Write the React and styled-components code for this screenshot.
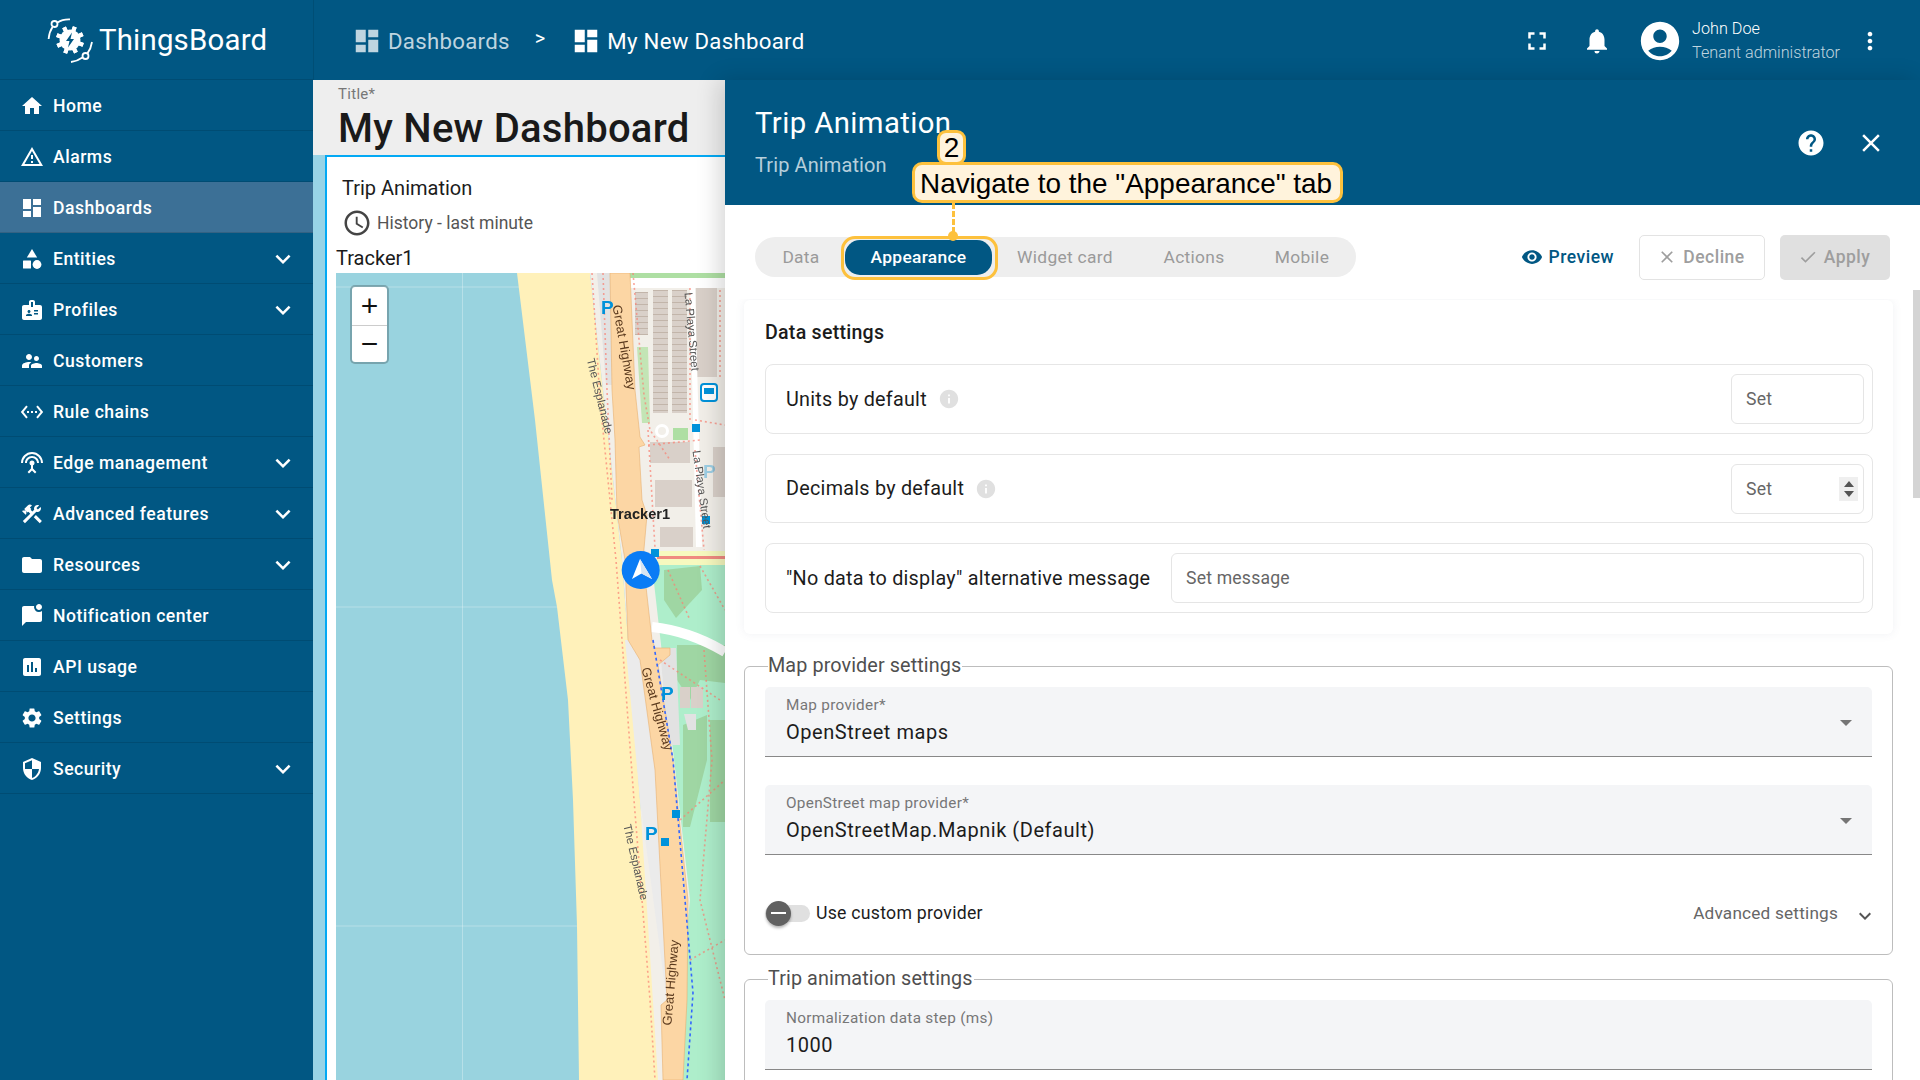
import React from "react";
import styled, { createGlobalStyle } from "styled-components";
import {
  MdHome,
  MdOutlineWarningAmber,
  MdDashboard,
  MdBadge,
  MdSupervisorAccount,
  MdSettingsEthernet,
  MdSettingsInputAntenna,
  MdConstruction,
  MdFolder,
  MdMarkChatUnread,
  MdInsertChart,
  MdSettings,
  MdSecurity,
  MdExpandMore,
  MdKeyboardArrowDown,
  MdAccessTime,
  MdFullscreen,
  MdNotifications,
  MdAccountCircle,
  MdMoreVert,
  MdHelp,
  MdClose,
  MdCheck,
  MdVisibility,
  MdInfo,
} from "react-icons/md";

const BLUE = "#015783";

const GlobalStyle = createGlobalStyle`
  html, body {
    margin: 0;
    height: 100%;
    overflow: hidden;
    background: #fff;
    font-family: Roboto, "Liberation Sans", sans-serif;
  }
  * { box-sizing: border-box; }
`;

const Page = styled.div`
  display: grid;
  grid-template-columns: 313px 1fr;
  height: 1080px;
  width: 1920px;
  overflow: hidden;
  position: relative;
`;

const Sidebar = styled.aside`
  background: ${BLUE};
  display: flex;
  flex-direction: column;
`;

const LogoRow = styled.div`
  height: 80px;
  display: flex;
  align-items: center;
  gap: 6px;
  padding-left: 47px;
  color: #fff;
  font-size: 29.4px;
  letter-spacing: 0.2px;
  border-bottom: 1px solid rgba(0, 0, 0, 0.12);
`;

const NavRow = styled.div`
  height: 51px;
  flex: none;
  display: flex;
  align-items: center;
  padding: 2px 20px 0;
  gap: 9px;
  color: #fff;
  font-size: 17.6px;
  font-weight: 500;
  letter-spacing: 0.5px;
  background: ${({ $active }) => ($active ? "#3c7096" : "transparent")};
  border-bottom: 1px solid rgba(0, 0, 0, 0.12);
  svg {
    flex: none;
  }
`;

const NavLabel = styled.span`
  flex: 1;
`;

const NavChevron = styled(MdExpandMore)`
  margin-right: -5px;
`;

const Main = styled.div`
  display: flex;
  flex-direction: column;
  min-width: 0;
`;

const TopBar = styled.header`
  height: 80px;
  flex: none;
  background: ${BLUE};
  display: flex;
  align-items: center;
  padding: 2px 0 0 38px;
  border-left: 1px solid rgba(0, 0, 0, 0.1);
  color: #fff;
`;

const Crumb = styled.div`
  display: flex;
  align-items: center;
  gap: 6px;
  font-size: 22.2px;
  letter-spacing: 0.3px;
  color: ${({ $dim }) => ($dim ? "rgba(255,255,255,.75)" : "#fff")};
`;

const CrumbSep = styled.span`
  font-size: 20px;
  margin: -6px 26px 0 25px;
`;

const TopActions = styled.div`
  margin-left: auto;
  display: flex;
  align-items: center;
  padding-right: 36px;
  margin-top: -1px;
`;

const BellIcon = styled(MdNotifications)`
  margin-left: 30px;
`;

const AvatarIcon = styled(MdAccountCircle)`
  margin-left: 25px;
`;

const UserBlock = styled.div`
  display: flex;
  flex-direction: column;
  gap: 5px;
  margin: 0 16px 0 9px;
  font-size: 16.2px;
  font-weight: 300;
`;

const UserRole = styled.span`
  color: rgba(255, 255, 255, 0.75);
`;

const Body = styled.div`
  flex: 1;
  display: flex;
  min-height: 0;
`;

const DashArea = styled.section`
  width: 412px;
  flex: none;
  display: flex;
  flex-direction: column;
  background: #98d3e6;
`;

const TitleBand = styled.div`
  height: 75px;
  flex: none;
  background: #eeeeee;
  padding: 6px 0 0 25px;
`;

const TitleCaption = styled.div`
  font-size: 15px;
  line-height: 17px;
  letter-spacing: 0.3px;
  color: #777;
`;

const TitleText = styled.div`
  font-size: 40px;
  line-height: 46px;
  margin-top: 3px;
  font-weight: 500;
  color: #1a1a1a;
  letter-spacing: 0.25px;
`;

const Widget = styled.div`
  flex: 1;
  margin-left: 12px;
  background: #fff;
  border-left: 2px solid #03a9f4;
  border-top: 2px solid #03a9f4;
  display: flex;
  flex-direction: column;
  min-height: 0;
`;

const WidgetHead = styled.div`
  height: 116px;
  flex: none;
  padding: 19px 0 0 9px;
  display: flex;
  flex-direction: column;
`;

const WidgetTitle = styled.div`
  font-size: 20px;
  line-height: 24px;
  color: #1c1c1c;
  padding-left: 6px;
`;

const WidgetSub = styled.div`
  display: flex;
  align-items: center;
  gap: 5px;
  margin-top: 8px;
  padding-left: 6px;
  font-size: 17.5px;
  line-height: 26px;
  color: #555;
  svg {
    color: #444;
  }
`;

const SeriesName = styled.div`
  margin-top: 8px;
  font-size: 20px;
  line-height: 24px;
  color: #1a1a1a;
`;

const MapWrap = styled.div`
  flex: 1;
  margin-left: 9px;
  position: relative;
  overflow: hidden;
  background: #99d3df;
`;

const MapSvg = styled.svg`
  display: block;
  filter: blur(0.5px);
`;

const ZoomBox = styled.div`
  position: absolute;
  left: 14px;
  top: 12px;
  width: 39px;
  border: 2px solid rgba(0, 0, 0, 0.22);
  border-radius: 5px;
  background: #fff;
  background-clip: padding-box;
`;

const ZoomBtn = styled.div`
  height: 37.5px;
  display: flex;
  align-items: center;
  justify-content: center;
  font-size: 30px;
  font-weight: 500;
  color: #111;
  font-family: "Liberation Sans", sans-serif;
  & + & {
    border-top: 1px solid #ccc;
  }
`;

const Panel = styled.section`
  flex: 1;
  min-width: 0;
  display: flex;
  flex-direction: column;
  background: #fff;
  box-shadow: -6px 0 22px rgba(0, 0, 0, 0.16);
  position: relative;
  z-index: 1;
`;

const PanelHead = styled.div`
  height: 125px;
  flex: none;
  background: ${BLUE};
  color: #fff;
  display: flex;
  align-items: center;
  padding: 0 34px 0 30px;
`;

const PanelTitles = styled.div`
  flex: 1;
  margin-top: -3px;
`;

const PanelTitle = styled.div`
  font-size: 29.3px;
  line-height: 34px;
  letter-spacing: 0.4px;
`;

const PanelSub = styled.div`
  margin-top: 13px;
  font-size: 20px;
  line-height: 24px;
  letter-spacing: 0.1px;
  color: rgba(255, 255, 255, 0.72);
`;

const HeadIcons = styled.div`
  display: flex;
  align-items: center;
  gap: 30px;
`;

const ToolRow = styled.div`
  height: 94px;
  flex: none;
  display: flex;
  align-items: center;
  padding: 10px 30px 0 30px;
`;

const TabPill = styled.div`
  height: 40px;
  width: 601px;
  background: #eeeeee;
  border-radius: 20px;
  display: flex;
  align-items: center;
  padding-left: 2px;
`;

const Tab = styled.div`
  width: ${({ $w }) => $w}px;
  height: 35px;
  flex: none;
  display: flex;
  align-items: center;
  justify-content: center;
  border-radius: 15px;
  font-size: 17.4px;
  letter-spacing: 0.3px;
  font-weight: ${({ $active }) => ($active ? 500 : 400)};
  background: ${({ $active }) => ($active ? BLUE : "transparent")};
  color: ${({ $active }) => ($active ? "#fff" : "#9a9a9a")};
`;

const ToolActions = styled.div`
  margin-left: auto;
  display: flex;
  align-items: center;
  font-size: 17.5px;
  font-weight: 500;
  letter-spacing: 0.5px;
`;

const PreviewBtn = styled.div`
  display: flex;
  align-items: center;
  gap: 6px;
  color: ${BLUE};
  margin-right: 25px;
`;

const ActionBtn = styled.div`
  height: 45px;
  width: ${({ $w }) => $w}px;
  display: flex;
  align-items: center;
  justify-content: center;
  gap: 6px;
  padding-right: 2px;
  color: #9e9e9e;
  border-radius: 5px;
  background: ${({ $filled }) => ($filled ? "#e0e0e0" : "#fff")};
  border: ${({ $filled }) => ($filled ? "0" : "1.5px solid #e3e3e3")};
  & + & {
    margin-left: 15px;
  }
`;

const Scroller = styled.div`
  flex: 1;
  min-height: 0;
  overflow: hidden;
  padding: 1px 27px 0 19px;
`;

const ScrollThumb = styled.div`
  position: absolute;
  top: 210px;
  right: 0;
  width: 7px;
  height: 208px;
  background: #d4d4d4;
`;

const Card = styled.div`
  height: 334px;
  border-radius: 6px;
  background: #fff;
  box-shadow: 0 0 10px rgba(90, 100, 130, 0.09);
  padding: 0 20px 0 21px;
`;

const CardTitle = styled.div`
  height: 64px;
  display: flex;
  align-items: center;
  font-size: 19.6px;
  font-weight: 500;
  letter-spacing: 0.25px;
  color: #1c1c1c;
`;

const SetRow = styled.div`
  height: ${({ $h }) => $h}px;
  border: 1.5px solid #e6e6e6;
  border-radius: 8px;
  display: flex;
  align-items: center;
  padding: 0 8px 0 20px;
  font-size: 19.8px;
  letter-spacing: 0.25px;
  color: #1c1c1c;
  & + & {
    margin-top: 20px;
  }
`;

const InfoDot = styled(MdInfo)`
  color: #e0e0e0;
  margin-left: 11px;
`;

const SetInput = styled.div`
  height: 50px;
  margin-left: auto;
  width: ${({ $wide }) => ($wide ? "693px" : "133px")};
  border: 1.5px solid #e5e5e5;
  border-radius: 6px;
  display: flex;
  align-items: center;
  padding: 0 5px 0 14px;
  font-size: 17.6px;
  letter-spacing: 0.2px;
  color: #666;
`;

const Spinner = styled.div`
  margin-left: auto;
  width: 19px;
  height: 24px;
  background: #efefef;
  display: flex;
  align-items: center;
  justify-content: center;
`;

const Fieldset = styled.fieldset`
  margin: ${({ $top }) => $top}px 0 0;
  padding: 0 20px 0 20px;
  height: ${({ $h }) => $h}px;
  border: 1px solid #bdbdbd;
  border-radius: 6px;
  min-width: 0;
`;

const Legend = styled.legend`
  margin-left: 3px;
  padding: 0 1px 0 0;
  font-size: 19.8px;
  line-height: 24px;
  letter-spacing: 0.1px;
  color: #4f4f4f;
`;

const FormField = styled.div`
  height: 70px;
  margin-top: ${({ $top }) => $top}px;
  background: #f4f5f7;
  border-bottom: 1.5px solid #888;
  border-radius: 5px 5px 0 0;
  padding: 10px 20px 0 21px;
  display: grid;
  grid-template-columns: 1fr auto;
  align-items: center;
  align-content: start;
`;

const FieldLabel = styled.div`
  grid-column: 1 / -1;
  font-size: 15.3px;
  line-height: 17px;
  letter-spacing: 0.3px;
  color: #777;
`;

const FieldValue = styled.div`
  font-size: 20px;
  line-height: 24px;
  margin-top: 6px;
  letter-spacing: 0.55px;
  color: #1c1c1c;
`;

const SelectArrow = styled.span`
  width: 0;
  height: 0;
  border-left: 6.5px solid transparent;
  border-right: 6.5px solid transparent;
  border-top: 6.5px solid #757575;
  margin: -12px 0 0 0;
`;

const ToggleRow = styled.div`
  display: flex;
  align-items: center;
  margin-top: 45px;
  height: 26px;
`;

const ToggleTrack = styled.div`
  width: 45px;
  height: 17px;
  border-radius: 9px;
  background: #e0e0e0;
  position: relative;
  flex: none;
`;

const ToggleThumb = styled.div`
  position: absolute;
  left: 1px;
  top: -4px;
  width: 25px;
  height: 25px;
  border-radius: 50%;
  background: #616161;
  box-shadow: 0 2px 3px rgba(0, 0, 0, 0.3);
  display: flex;
  align-items: center;
  justify-content: center;
  &::after {
    content: "";
    width: 15px;
    height: 2px;
    background: #fff;
  }
`;

const ToggleLabel = styled.span`
  margin-left: 6px;
  font-size: 17.7px;
  letter-spacing: 0.25px;
  color: #1c1c1c;
`;

const AdvancedLink = styled.div`
  margin-left: auto;
  margin-right: -5px;
  display: flex;
  align-items: center;
  gap: 15px;
  font-size: 17.2px;
  letter-spacing: 0.2px;
  color: #666;
  svg {
    margin-top: 6px;
    color: #555;
  }
`;

/* tour callout laid over the panel */
const Callout = styled.div`
  position: absolute;
  left: 912px;
  top: 162px;
  height: 41px;
  padding: 2px 8px 0 5px;
  display: flex;
  align-items: center;
  background: #fff3dc;
  border: 3px solid #fdc13d;
  border-radius: 10px;
  font-family: "Liberation Sans", Arial, sans-serif;
  font-size: 27.9px;
  color: #000;
  white-space: nowrap;
  z-index: 5;
`;

const CalloutBadge = styled.div`
  position: absolute;
  left: 937px;
  top: 130px;
  width: 29px;
  height: 35px;
  display: flex;
  align-items: center;
  justify-content: center;
  background: #fff3dc;
  border: 3px solid #fdc13d;
  border-radius: 9px;
  font-family: "Liberation Sans", Arial, sans-serif;
  font-size: 28px;
  color: #000;
  z-index: 6;
`;

const CalloutLine = styled.div`
  position: absolute;
  left: 951.5px;
  top: 203px;
  height: 30px;
  border-left: 3px dashed #fdc13d;
  z-index: 5;
`;

const CalloutDot = styled.div`
  position: absolute;
  left: 948px;
  top: 231px;
  width: 10px;
  height: 10px;
  border-radius: 50%;
  background: #fdc13d;
  z-index: 6;
`;

const Highlight = styled.div`
  position: absolute;
  left: 840.5px;
  top: 236px;
  width: 157px;
  height: 44px;
  border: 3.5px solid #fdc13d;
  border-radius: 14px;
  z-index: 5;
`;

function EntitiesIcon() {
  return (
    <svg width="24" height="24" viewBox="0 0 24 24" fill="#fff">
      <path d="M12 2l5.2 8.6H6.8z" />
      <rect x="3" y="13.5" width="8" height="8" rx="0.5" />
      <circle cx="17" cy="17.5" r="4.4" />
    </svg>
  );
}

function Logo() {
  return (
    <svg width="46" height="46" viewBox="0 0 46 46" fill="none" stroke="#fff" strokeWidth="1.8">
      <g transform="translate(23 23)" stroke="none">
        {[0, 45, 90, 135, 180, 225, 270, 315].map((a) => (
          <rect key={a} x="-2" y="-14" width="4" height="28" fill="#fff" transform={`rotate(${a + 20})`} />
        ))}
        <circle r="10.5" fill="#fff" />
        <path d="M2 -7.5 L-4 1 L-0.5 1 L-2 7.5 L4 -1 L0.5 -1 Z" fill={BLUE} />
      </g>
      <circle cx="7.5" cy="7" r="3" />
      <path d="M10.5 5.5C14 3.2 18.5 2.2 23 2.4" />
      <path d="M5.8 9.6C3.4 13.2 2 17.4 1.6 22" />
      <circle cx="38.5" cy="39" r="3" />
      <path d="M35.5 40.5C32 43 28 44.6 24 45" />
      <path d="M40.4 36.4C43 33 44.4 29 45 25" />
    </svg>
  );
}

function TripMap() {
  return (
    <MapSvg width="389" height="807" viewBox="336 273 389 807">
      <rect x="336" y="273" width="389" height="807" fill="#99d3df" />
      {/* tile seams */}
      <g stroke="#fff" strokeOpacity="0.3">
        <path d="M462.5 273V1080M336 287H725M336 607H725M336 926H725" />
      </g>
      {/* sand */}
      <path d="M517 273L535 420L552 580L557 607L568 700L573 800L577 926L579 1080H665L640 800L622 560L590 273Z" fill="#fff1ba" />
      {/* land */}
      <path d="M590 273H725V1080H658L640 800L622 560Z" fill="#f2efe9" />
      <path d="M652 565H725V1080H672L690 900L665 680Z" fill="#aeeecb" />
      <path d="M664 570L700 566L702 590L676 618L664 600Z" fill="#9fd6a3" />
      <path d="M677 645H725V683L700 680L690 700L677 680Z" fill="#9fd6a3" />
      <path d="M683 725L707 715V760L690 827H683ZM710 720H725V822H710Z" fill="#9fd6a3" />
      <path d="M625 640L660 640L682 1010H668L640 800Z" fill="#ebebeb" />
      <path d="M597 273H612L614 385H606Z" fill="#e2e2e2" />
      <path d="M660 648H676L680 745L668 745Z" fill="#e2e2e2" />
      <rect x="680" y="687" width="10" height="21" fill="#d9d0c9" />
      <rect x="691" y="687" width="12" height="21" fill="#d9d0c9" />
      <path d="M684 714H696V730H688Z" fill="#e2e2e2" />
      {/* top blocks */}
      <rect x="630" y="273" width="95" height="5" fill="#aedfa3" />
      <rect x="630" y="278" width="95" height="10" fill="#fff" />
      <rect x="635" y="292" width="13" height="43" fill="#d9d0c9" />
      <rect x="653" y="290" width="15" height="123" fill="#d9d0c9" />
      <rect x="672" y="290" width="15" height="123" fill="#d9d0c9" />
      <rect x="696" y="288" width="21" height="89" fill="#d9d0c9" />
      <g fill="none" stroke="#c2b5aa" strokeDasharray="1 5">
        <path d="M641.5 292V335" strokeWidth="13" />
        <path d="M660.5 290V413" strokeWidth="15" />
        <path d="M679.5 290V413" strokeWidth="15" />
      </g>
      <path d="M637 347H648L650 423H642Z" fill="#c3e5b5" />
      <path d="M690 288H695L702 547H696Z" fill="#fff" />
      <rect x="650" y="442" width="40" height="21" fill="#d9d0c9" />
      <rect x="655" y="480" width="37" height="27" fill="#d9d0c9" />
      <rect x="660" y="527" width="33" height="20" fill="#d9d0c9" />
      <rect x="713" y="447" width="12" height="50" fill="#d9d0c9" />
      <rect x="673" y="428" width="15" height="12" fill="#aedfa3" />
      <circle cx="662" cy="431" r="5.5" fill="none" stroke="#fff" strokeWidth="3" />
      {/* east-west road and the curve */}
      <rect x="657" y="551" width="68" height="14" fill="#f7f9bf" />
      <rect x="657" y="556" width="68" height="3" fill="#f08a80" />
      <path d="M652 627C680 630 705 640 725 652" fill="none" stroke="#fff" strokeWidth="10" />
      {/* highway */}
      <path d="M610 273H630L635 390L640 437L645 445L639 447L642 500L647 515L643 560L652 640L655 648H670V655L658 665L673 760L688 900L687 1000L683 1080H663L661 1005L667 1000L655 770L640 660L628 640L625 560L617 513L615 440L612 390Z" fill="#fcd6a4" stroke="#e8b070" strokeWidth="0.6" />
      {/* footpaths */}
      <g fill="none" stroke="#fa8072" strokeOpacity="0.7" strokeWidth="1.6" strokeDasharray="2 3">
        <path d="M592 273L600 400L616 560L622 640L634 800L650 1000L655 1080" />
        <path d="M603 273L607 390L612 500" />
        <path d="M633 273L644 395L650 430L670 460M648 445L700 440" />
        <path d="M690 288V420M720 290V380M695 420L725 425" />
        <path d="M668 570L690 620M700 566L725 610M660 660L720 700" />
        <path d="M704 650L712 760L700 900L725 1000M680 820L725 780M690 960L725 940" />
        <path d="M648 430L655 548M695 450L704 550" />
      </g>
      <path d="M653 640L673 760L693 993L687 1080" fill="none" stroke="#3366ff" strokeWidth="1.6" strokeDasharray="3 3" />
      {/* stops and parking */}
      <g fill="#0092da">
        <rect x="692" y="424" width="8" height="8" />
        <rect x="702" y="516" width="8" height="8" />
        <rect x="651" y="549" width="8" height="8" />
        <rect x="672" y="810" width="8" height="8" />
        <rect x="661" y="838" width="8" height="8" />
      </g>
      <rect x="701" y="384" width="16" height="17" rx="3" fill="#fff" stroke="#0092da" strokeWidth="2" />
      <rect x="704" y="388" width="10" height="6" fill="#0092da" />
      <g fontFamily="'Liberation Sans', sans-serif" fontWeight="700" fontSize="19" fill="#0092da">
        <text x="601" y="314">P</text>
        <text x="661" y="700">P</text>
        <text x="645" y="840">P</text>
        <text x="703" y="478" fillOpacity="0.35">P</text>
      </g>
      <g fontFamily="'Liberation Sans', sans-serif" fontSize="13" fill="#5b3a1e" textAnchor="middle">
        <text transform="translate(620 348) rotate(80)">Great Highway</text>
        <text transform="translate(653 710) rotate(74)">Great Highway</text>
        <text transform="translate(675 983) rotate(-85)">Great Highway</text>
      </g>
      <g fontFamily="'Liberation Sans', sans-serif" fontSize="11.5" fill="#555" textAnchor="middle">
        <text transform="translate(596 397) rotate(76)">The Esplanade</text>
        <text transform="translate(632 863) rotate(77)">The Esplanade</text>
        <text transform="translate(688 332) rotate(85)">La Playa Street</text>
        <text transform="translate(698 490) rotate(82)">La Playa Street</text>
      </g>
      {/* trip marker */}
      <text x="610" y="519" fontFamily="'Liberation Sans', sans-serif" fontWeight="700" fontSize="14.6" fill="#222">Tracker1</text>
      <circle cx="640.7" cy="570" r="19" fill="#0a7cf5" />
      <path d="M640 559L652 579L641.5 573.5L632 579Z" fill="#fff" />
      <path d="M640 559L652 579L641.5 573.5Z" fill="#d6e4f2" />
    </MapSvg>
  );
}

const navItems = [
  { label: "Home", Icon: MdHome },
  { label: "Alarms", Icon: MdOutlineWarningAmber },
  { label: "Dashboards", Icon: MdDashboard, active: true },
  { label: "Entities", Icon: EntitiesIcon, more: true },
  { label: "Profiles", Icon: MdBadge, more: true },
  { label: "Customers", Icon: MdSupervisorAccount },
  { label: "Rule chains", Icon: MdSettingsEthernet },
  { label: "Edge management", Icon: MdSettingsInputAntenna, more: true },
  { label: "Advanced features", Icon: MdConstruction, more: true },
  { label: "Resources", Icon: MdFolder, more: true },
  { label: "Notification center", Icon: MdMarkChatUnread },
  { label: "API usage", Icon: MdInsertChart },
  { label: "Settings", Icon: MdSettings },
  { label: "Security", Icon: MdSecurity, more: true },
];

const tabs = [
  { label: "Data", w: 88 },
  { label: "Appearance", w: 147, active: true },
  { label: "Widget card", w: 146 },
  { label: "Actions", w: 112 },
  { label: "Mobile", w: 104 },
];

export default function App() {
  return (
    <Page>
      <GlobalStyle />
      <Sidebar>
        <LogoRow>
          <Logo />
          ThingsBoard
        </LogoRow>
        {navItems.map(({ label, Icon, active, more }) => (
          <NavRow key={label} $active={active}>
            <Icon size={24} />
            <NavLabel>{label}</NavLabel>
            {more && <NavChevron size={30} />}
          </NavRow>
        ))}
      </Sidebar>
      <Main>
        <TopBar>
          <Crumb $dim>
            <MdDashboard size={30} />
            Dashboards
          </Crumb>
          <CrumbSep>&gt;</CrumbSep>
          <Crumb>
            <MdDashboard size={30} />
            My New Dashboard
          </Crumb>
          <TopActions>
            <MdFullscreen size={30} />
            <BellIcon size={30} />
            <AvatarIcon size={46} />
            <UserBlock>
              <span>John Doe</span>
              <UserRole>Tenant administrator</UserRole>
            </UserBlock>
            <MdMoreVert size={28} />
          </TopActions>
        </TopBar>
        <Body>
          <DashArea>
            <TitleBand>
              <TitleCaption>Title*</TitleCaption>
              <TitleText>My New Dashboard</TitleText>
            </TitleBand>
            <Widget>
              <WidgetHead>
                <WidgetTitle>Trip Animation</WidgetTitle>
                <WidgetSub>
                  <MdAccessTime size={30} />
                  History - last minute
                </WidgetSub>
                <SeriesName>Tracker1</SeriesName>
              </WidgetHead>
              <MapWrap>
                <TripMap />
                <ZoomBox>
                  <ZoomBtn>+</ZoomBtn>
                  <ZoomBtn>−</ZoomBtn>
                </ZoomBox>
              </MapWrap>
            </Widget>
          </DashArea>
          <Panel>
            <PanelHead>
              <PanelTitles>
                <PanelTitle>Trip Animation</PanelTitle>
                <PanelSub>Trip Animation</PanelSub>
              </PanelTitles>
              <HeadIcons>
                <MdHelp size={30} />
                <MdClose size={30} />
              </HeadIcons>
            </PanelHead>
            <ToolRow>
              <TabPill>
                {tabs.map((t) => (
                  <Tab key={t.label} $w={t.w} $active={t.active}>
                    {t.label}
                  </Tab>
                ))}
              </TabPill>
              <ToolActions>
                <PreviewBtn>
                  <MdVisibility size={22} />
                  Preview
                </PreviewBtn>
                <ActionBtn $w={126}>
                  <MdClose size={20} />
                  Decline
                </ActionBtn>
                <ActionBtn $w={110} $filled>
                  <MdCheck size={20} />
                  Apply
                </ActionBtn>
              </ToolActions>
            </ToolRow>
            <ScrollThumb />
            <Scroller>
              <Card>
                <CardTitle>Data settings</CardTitle>
                <SetRow $h={70}>
                  Units by default
                  <InfoDot size={22} />
                  <SetInput>Set</SetInput>
                </SetRow>
                <SetRow $h={69}>
                  Decimals by default
                  <InfoDot size={22} />
                  <SetInput>
                    Set
                    <Spinner>
                      <svg width="12" height="18" viewBox="0 0 12 18" fill="#555">
                        <path d="M6 1l5 6H1zM6 17l5-6H1z" />
                      </svg>
                    </Spinner>
                  </SetInput>
                </SetRow>
                <SetRow $h={70}>
                  "No data to display" alternative message
                  <SetInput $wide>Set message</SetInput>
                </SetRow>
              </Card>
              <Fieldset $top={20} $h={301}>
                <Legend>Map provider settings</Legend>
                <FormField $top={9}>
                  <FieldLabel>Map provider*</FieldLabel>
                  <FieldValue>OpenStreet maps</FieldValue>
                  <SelectArrow />
                </FormField>
                <FormField $top={28}>
                  <FieldLabel>OpenStreet map provider*</FieldLabel>
                  <FieldValue>OpenStreetMap.Mapnik (Default)</FieldValue>
                  <SelectArrow />
                </FormField>
                <ToggleRow>
                  <ToggleTrack>
                    <ToggleThumb />
                  </ToggleTrack>
                  <ToggleLabel>Use custom provider</ToggleLabel>
                  <AdvancedLink>
                    Advanced settings
                    <MdKeyboardArrowDown size={24} />
                  </AdvancedLink>
                </ToggleRow>
              </Fieldset>
              <Fieldset $top={12} $h={200}>
                <Legend>Trip animation settings</Legend>
                <FormField $top={9}>
                  <FieldLabel>Normalization data step (ms)</FieldLabel>
                  <FieldValue>1000</FieldValue>
                </FormField>
              </Fieldset>
            </Scroller>
          </Panel>
        </Body>
      </Main>
      <CalloutBadge>2</CalloutBadge>
      <Callout>Navigate to the "Appearance" tab</Callout>
      <CalloutLine />
      <CalloutDot />
      <Highlight />
    </Page>
  );
}
